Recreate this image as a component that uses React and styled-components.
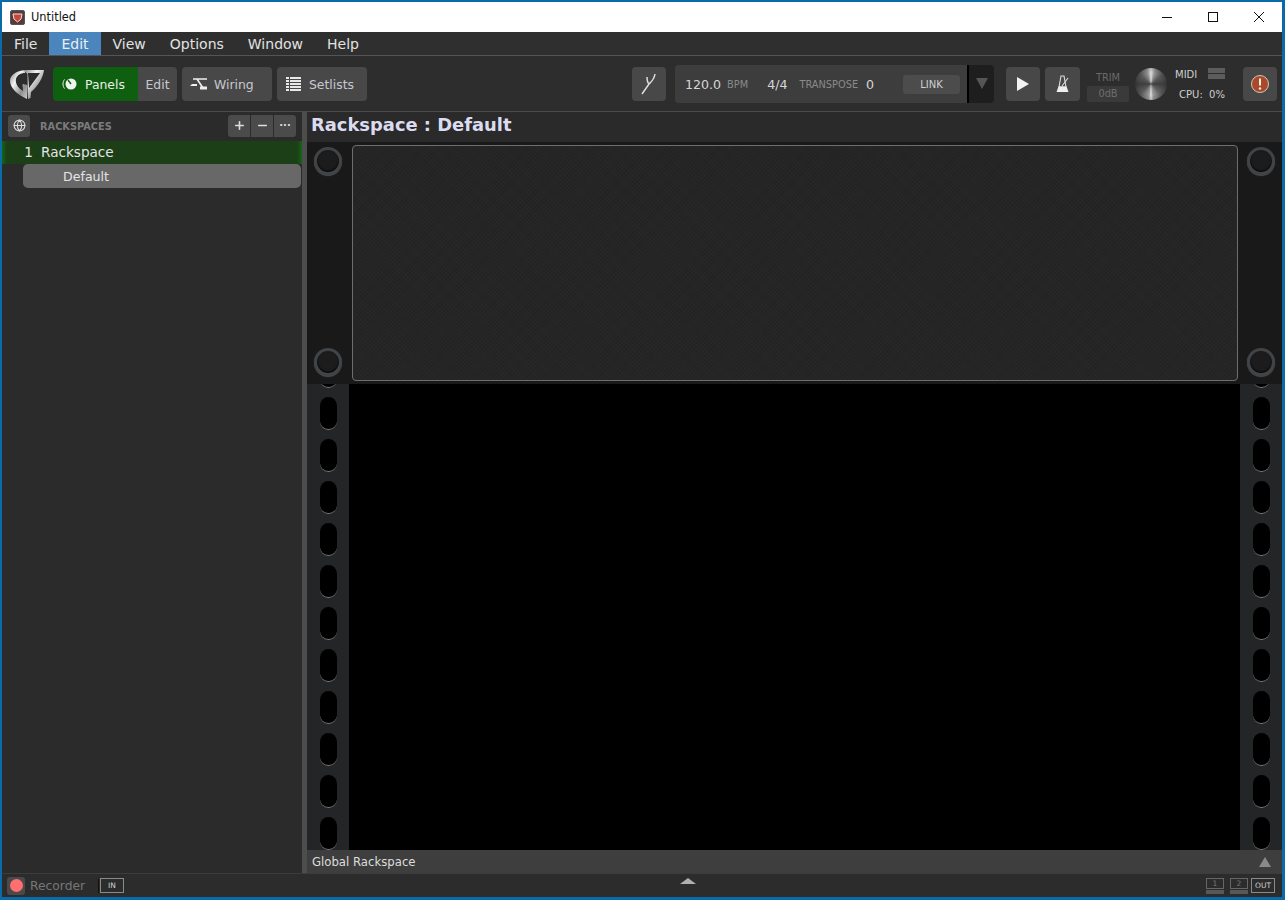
import React from "react"
import styled, { createGlobalStyle } from "styled-components"
import { Plus, Minus, Globe } from "lucide-react"

const Global = createGlobalStyle`
  html, body {
    margin: 0;
    padding: 0;
    height: 100%;
    overflow: hidden;
    background: #0b6aa8;
  }
  * {
    box-sizing: border-box;
  }
`

const Window = styled.div`
  width: 1285px;
  height: 900px;
  display: flex;
  flex-direction: column;
  padding: 2px 3px 3px 2px;
  background: #0b6aa8;
  font-family: "DejaVu Sans", sans-serif;
  color: #ddd;
`

const TitleBar = styled.div`
  height: 30px;
  flex: none;
  display: flex;
  align-items: center;
  background: #fff;
  color: #111;
  font-size: 11.4px;
  padding-left: 8px;
`

const AppIcon = styled.div`
  width: 15px;
  height: 15px;
  border-radius: 2px;
  background: #5a3a36;
  border: 1px solid #555;
  margin-right: 6px;
  display: flex;
  align-items: center;
  justify-content: center;
`

const WindowControls = styled.div`
  margin-left: auto;
  display: flex;
  align-items: center;
`

const WindowButton = styled.div`
  width: 46px;
  height: 30px;
  display: flex;
  align-items: center;
  justify-content: center;
`

const MenuBar = styled.div`
  height: 24px;
  flex: none;
  display: flex;
  background: #2f2f2f;
  border-bottom: 1px solid #555;
`

const MenuItem = styled.div`
  height: 23px;
  padding: 0 12px;
  display: flex;
  align-items: center;
  font-size: 14px;
  color: ${({ $active }) => ($active ? "#e8eef5" : "#e2e2e2")};
  background: ${({ $active }) => ($active ? "#4a86bd" : "transparent")};
`

const Toolbar = styled.div`
  height: 56px;
  flex: none;
  display: flex;
  align-items: center;
  background: #2d2d2d;
  border-bottom: 1px solid #4a4a4a;
  padding: 0 5px 0 7px;
`

const Logo = styled.svg`
  width: 36px;
  height: 32px;
  flex: none;
  margin-right: 8px;
`

const ToolButton = styled.div`
  height: 34px;
  width: ${({ $w }) => $w}px;
  flex: none;
  display: flex;
  align-items: center;
  justify-content: ${({ $pl }) => ($pl ? "flex-start" : "center")};
  gap: ${({ $gap }) => $gap ?? 7}px;
  padding-left: ${({ $pl }) => $pl || 0}px;
  padding-top: 1px;
  margin-left: ${({ $ml }) => $ml ?? 5}px;
  font-size: 12.4px;
  color: ${({ $on }) => ($on ? "#e8f0e8" : "#c8c8d0")};
  background: ${({ $on }) => ($on ? "#0f5f10" : "#484848")};
  border-radius: ${({ $radius }) => $radius || "4px"};
`

const Transport = styled.div`
  display: flex;
  align-items: center;
  margin-left: auto;
`

const Display = styled.div`
  width: 294px;
  height: 38px;
  margin-left: 9px;
  display: flex;
  align-items: center;
  background: #3d3d3d;
  border-radius: 4px 0 0 4px;
  border-right: 2px solid #000;
  padding: 1px 0 0 10px;
  font-size: 12.6px;
  color: #d6d6d6;
`

const Small = styled.span`
  font-size: 9.8px;
  color: #8a8a8a;
  margin-left: ${({ $ml }) => $ml || 0}px;
`

const Value = styled.span`
  margin-left: ${({ $ml }) => $ml || 0}px;
`

const LinkButton = styled.div`
  width: 57px;
  height: 19px;
  margin-left: auto;
  margin-right: 7px;
  display: flex;
  align-items: center;
  justify-content: center;
  background: #4c4c4c;
  border-radius: 3px;
  font-size: 10px;
  color: #d0d0d0;
`

const DropDown = styled.div`
  width: 25px;
  height: 38px;
  display: flex;
  align-items: center;
  justify-content: center;
  background: #1e1e1e;
  border-radius: 0 4px 4px 0;
`

const Arrow = styled.div`
  width: 0;
  height: 0;
  border-left: ${({ $w }) => $w}px solid transparent;
  border-right: ${({ $w }) => $w}px solid transparent;
  border-${({ $up }) => ($up ? "bottom" : "top")}: ${({ $h }) => $h}px solid ${({ $c }) => $c};
`

const Trim = styled.div`
  width: 42px;
  margin: 6px 0 0 7px;
  display: flex;
  flex-direction: column;
  align-items: center;
  gap: 3px;
  font-size: 9.8px;
  color: #6a6a6a;
`

const TrimValue = styled.div`
  width: 42px;
  height: 16px;
  display: flex;
  align-items: center;
  justify-content: center;
  background: #3a3a3a;
  color: #6e6e6e;
  border-radius: 2px;
`

const Knob = styled.div`
  width: 32px;
  height: 32px;
  margin-left: 6px;
  flex: none;
  border-radius: 50%;
  background:
    radial-gradient(circle, rgba(60, 60, 60, 0.1) 0 50%, rgba(0, 0, 0, 0.45) 100%),
    conic-gradient(#f0f0f0 0deg, #9a9a9a 18deg, #5c5c5c 50deg, #3e3e3e 90deg, #666 135deg, #a8a8a8 170deg, #f6f6f6 180deg, #a8a8a8 190deg, #5c5c5c 230deg, #3e3e3e 270deg, #5c5c5c 310deg, #9a9a9a 342deg, #f0f0f0 360deg);
`

const Meters = styled.div`
  width: 58px;
  margin: 2px 0 0 8px;
  display: grid;
  grid-template-columns: 33px 17px;
  row-gap: 9px;
  align-items: center;
  font-size: 10px;
  color: #cfcfcf;
`

const MidiLights = styled.div`
  display: flex;
  flex-direction: column;
  gap: 1px;
  margin-top: -3px;
`

const MidiLight = styled.div`
  width: 17px;
  height: 5px;
  background: #5c5c5c;
`

const Cpu = styled.div`
  grid-column: 1 / 3;
  text-align: right;
`

const Main = styled.div`
  flex: 1;
  min-height: 0;
  display: flex;
  background: #2a2a2a;
`

const Sidebar = styled.div`
  width: 300px;
  flex: none;
  background: #2b2b2b;
`

const SideHead = styled.div`
  height: 29px;
  display: flex;
  align-items: center;
  padding: 0 6px 2px 6px;
`

const SideButton = styled.div`
  width: 22px;
  height: 22px;
  display: flex;
  align-items: center;
  justify-content: center;
  background: #4b4b4b;
  color: #ddd;
  border-radius: ${({ $radius }) => $radius || "3px"};
  margin-left: ${({ $ml }) => $ml || 0}px;
  font-size: 10px;
  font-weight: 700;
  line-height: 1;
`

const SideTitle = styled.div`
  margin: 2px auto 0 10px;
  font-size: 9.8px;
  font-weight: 700;
  color: #7c7c7c;
`

const RackRow = styled.div`
  height: 23px;
  display: flex;
  align-items: center;
  padding-bottom: 2px;
  background: linear-gradient(90deg, #146414 0, #1c3f18 5px, #1c3f18 calc(100% - 5px), #146414 100%);
  font-size: 13.6px;
  color: #e4e4e4;
`

const RackIndex = styled.span`
  width: 39px;
  padding-right: 8px;
  text-align: right;
`

const VariationRow = styled.div`
  height: 24px;
  margin: 0 1px 0 21px;
  padding-left: 40px;
  display: flex;
  align-items: center;
  background: #686868;
  border-radius: 5px;
  font-size: 12.6px;
  color: #e4e4e4;
`

const Splitter = styled.div`
  width: 5px;
  flex: none;
  background: #4d4d4d;
`

const Content = styled.div`
  flex: 1;
  min-width: 0;
  display: flex;
  flex-direction: column;
`

const RackHead = styled.div`
  height: 30px;
  flex: none;
  display: flex;
  align-items: center;
  padding: 0 0 5px 4px;
  background: #2a2a2a;
  font-size: 17.9px;
  font-weight: 700;
  color: #dcdcf0;
`

const TopRack = styled.div`
  height: 242px;
  flex: none;
  display: flex;
  background: #191919;
`

const ScrewColumn = styled.div`
  width: 44px;
  flex: none;
  display: flex;
  flex-direction: column;
  align-items: center;
  justify-content: space-between;
  padding: 5px ${({ $left }) => ($left ? "2px" : "0")} 8px ${({ $left }) => ($left ? "0" : "2px")};
`

const Screw = styled.div`
  width: 28px;
  height: 28px;
  border-radius: 50%;
  background: #1c1c1c;
  border: 3px solid #404447;
  box-shadow: inset 0 -1px 2px #000, 0 1px 1px #4c4c4c;
`

const Panel = styled.div`
  flex: 1;
  margin: 3px 0 3px 1px;
  background:
    repeating-linear-gradient(45deg, rgba(255, 255, 255, 0.012) 0 1px, transparent 1px 3px),
    repeating-linear-gradient(-45deg, rgba(0, 0, 0, 0.07) 0 1px, transparent 1px 3px),
    #252525;
  border: 1px solid #6e6e6e;
  border-radius: 4px;
`

const LowerRack = styled.div`
  flex: 1;
  min-height: 0;
  display: flex;
  background: #000;
`

const Rail = styled.div`
  width: 42px;
  flex: none;
  overflow: hidden;
  display: flex;
  flex-direction: column;
  align-items: center;
  gap: 9px;
  background: #232527;
`

const Slot = styled.div`
  width: 17px;
  height: 33px;
  flex: none;
  border-radius: 9px;
  background: #000;
  border-bottom: 1px solid #7c7c7c;
  &:first-child {
    margin-top: -29px;
  }
`

const Hole = styled.div`
  flex: 1;
`

const GlobalBar = styled.div`
  height: 23px;
  flex: none;
  display: flex;
  align-items: center;
  justify-content: space-between;
  padding: 0 11px 0 5px;
  background: #3e3e3e;
  font-size: 11.7px;
  color: #dcdcdc;
`

const StatusBar = styled.div`
  height: 24px;
  flex: none;
  position: relative;
  display: flex;
  align-items: center;
  background: #2c2c2c;
  border-top: 1px solid #3c3c3c;
  padding: 0 7px 0 5px;
`

const RecordButton = styled.div`
  width: 18px;
  height: 18px;
  display: flex;
  align-items: center;
  justify-content: center;
  background: #4a4a4a;
  border-radius: 3px;
`

const RecordDot = styled.div`
  width: 13px;
  height: 13px;
  border-radius: 50%;
  background: #ff6f70;
`

const RecorderLabel = styled.div`
  width: 74px;
  padding-left: 5px;
  border-right: 1px solid #111;
  font-size: 12.3px;
  color: #777;
`

const PortBox = styled.div`
  width: 24px;
  height: 15px;
  margin-left: ${({ $ml }) => $ml || 0}px;
  display: flex;
  align-items: center;
  justify-content: center;
  border: 1px solid ${({ $dim }) => ($dim ? "#666" : "#8a8a8a")};
  font-size: 7.5px;
  color: ${({ $dim }) => ($dim ? "#777" : "#d0d0d0")};
`

const Channel = styled.div`
  margin-left: 6px;
  display: flex;
  flex-direction: column;
  gap: 1px;
`

const ChannelLevel = styled.div`
  width: 18px;
  height: 4px;
  background: #585858;
`

const ChannelBox = styled(PortBox)`
  width: 18px;
  height: 11px;
  margin: 0;
`

const PortsRight = styled.div`
  margin-left: auto;
  display: flex;
  align-items: center;
`

const Expand = styled.div`
  position: absolute;
  left: 678px;
  top: 4px;
`

const slots = Array.from({ length: 13 })
const listRows = [1, 4, 7, 10, 13]

const RackRail = () => (
  <Rail>
    {slots.map((_, i) => (
      <Slot key={i} />
    ))}
  </Rail>
)

const Screws = ({ left }) => (
  <ScrewColumn $left={left}>
    <Screw />
    <Screw />
  </ScrewColumn>
)

export default function App() {
  return (
    <Window>
      <Global />
      <TitleBar>
        <AppIcon>
          <svg width="11" height="11" viewBox="0 0 11 11">
            <path d="M1 2h9l-1 5-3.5 3L2 7z" fill="#c9463a" stroke="#e8e0dc" strokeWidth="1" />
          </svg>
        </AppIcon>
        Untitled
        <WindowControls>
          <WindowButton>
            <svg width="12" height="12" viewBox="0 0 12 12">
              <path d="M1 6.5h10" stroke="#111" strokeWidth="1" />
            </svg>
          </WindowButton>
          <WindowButton>
            <svg width="12" height="12" viewBox="0 0 12 12">
              <rect x="1.5" y="1.5" width="9" height="9" fill="none" stroke="#111" />
            </svg>
          </WindowButton>
          <WindowButton>
            <svg width="12" height="12" viewBox="0 0 12 12">
              <path d="M1 1l10 10M11 1L1 11" stroke="#111" strokeWidth="1" />
            </svg>
          </WindowButton>
        </WindowControls>
      </TitleBar>

      <MenuBar>
        <MenuItem>File</MenuItem>
        <MenuItem $active>Edit</MenuItem>
        <MenuItem>View</MenuItem>
        <MenuItem>Options</MenuItem>
        <MenuItem>Window</MenuItem>
        <MenuItem>Help</MenuItem>
      </MenuBar>

      <Toolbar>
        <Logo viewBox="0 0 36 32">
          <defs>
            <linearGradient id="gp" x1="0" y1="0" x2="1" y2="1">
              <stop offset="0" stopColor="#7e7e7e" />
              <stop offset="0.35" stopColor="#f4f4f4" />
              <stop offset="0.7" stopColor="#8e8e8e" />
              <stop offset="1" stopColor="#d0d0d0" />
            </linearGradient>
          </defs>
          <path d="M16 2C7 3 1 7 1 13c0 7 8 14 17 18l.5-14-5-1 .5 7C9 20 6 15 7 11c1-4 5-6 9-6z" fill="url(#gp)" />
          <path fillRule="evenodd" d="M14 2h21c-1 8-6 16-13 22l-.5 6-2.5 1L18.500 6zM19 5h12L20 20z" fill="url(#gp)" />
        </Logo>
        <ToolButton $on $w={85} $ml={0} $pl={9} $radius="4px 0 0 4px">
          <svg width="16" height="14" viewBox="0 0 16 14">
            <circle cx="9" cy="7" r="5.5" fill="#eef4ee" />
            <path d="M9 7L6 3" stroke="#0f5f10" strokeWidth="1.4" />
            <path d="M2.500 2.500C.5 5 .5 9 2.500 11.500" fill="none" stroke="#eef4ee" />
          </svg>
          Panels
        </ToolButton>
        <ToolButton $w={39} $ml={0} $radius="0 4px 4px 0">Edit</ToolButton>
        <ToolButton $w={90} $pl={8} $gap={6}>
          <svg width="18" height="14" viewBox="0 0 18 14">
            <path d="M3 2h14M7 2l6 9" fill="none" stroke="#eee" strokeWidth="1.6" />
            <path d="M0 9l2-2h5v2zM10 9.500h7v3h-7z" fill="#eee" />
          </svg>
          Wiring
        </ToolButton>
        <ToolButton $w={90} $pl={9} $gap={8}>
          <svg width="15" height="15" viewBox="0 0 15 15">
            {listRows.map((y) => (
              <path key={y} d={`M0 ${y}h3M4 ${y}h11`} stroke="#e8e8e8" strokeWidth="2" />
            ))}
          </svg>
          Setlists
        </ToolButton>

        <Transport>
          <ToolButton $w={34} $ml={0}>
            <svg width="18" height="22" viewBox="0 0 18 22">
              <path d="M2 21l7-10c2-2 5-4 6-10M9 11C7 9 7 6 7 4" fill="none" stroke="#ddd" strokeWidth="1.5" />
            </svg>
          </ToolButton>
          <Display>
            <Value>120.0</Value>
            <Small $ml={6}>BPM</Small>
            <Value $ml={19}>4/4</Value>
            <Small $ml={12}>TRANSPOSE</Small>
            <Value $ml={8}>0</Value>
            <LinkButton>LINK</LinkButton>
          </Display>
          <DropDown>
            <Arrow $w={6} $h={11} $c="#555" />
          </DropDown>
          <ToolButton $w={34} $ml={12}>
            <svg width="14" height="16" viewBox="0 0 14 16">
              <path d="M1 1l12 7-12 7z" fill="#f2f2f2" />
            </svg>
          </ToolButton>
          <ToolButton $w={35}>
            <svg width="18" height="18" viewBox="0 0 18 18">
              <path d="M7 1h3l2 11H5z" fill="none" stroke="#ddd" strokeWidth="1.1" />
              <path d="M4.500 11.500h8l2 5.500h-12z" fill="#eee" />
              <path d="M8 11l6-8" stroke="#ddd" strokeWidth="1.1" />
            </svg>
          </ToolButton>
          <Trim>
            TRIM
            <TrimValue>0dB</TrimValue>
          </Trim>
          <Knob />
          <Meters>
            <span>MIDI</span>
            <MidiLights>
              <MidiLight />
              <MidiLight />
            </MidiLights>
            <Cpu>CPU:&nbsp; 0%</Cpu>
          </Meters>
          <ToolButton $w={34} $ml={10}>
            <svg width="20" height="20" viewBox="0 0 20 20">
              <circle cx="10" cy="10" r="8.500" fill="#a8492a" stroke="#d9c4b8" />
              <path d="M10 4.500v7" stroke="#f4ece6" strokeWidth="2" />
              <circle cx="10" cy="14.500" r="1.200" fill="#f4ece6" />
            </svg>
          </ToolButton>
        </Transport>
      </Toolbar>

      <Main>
        <Sidebar>
          <SideHead>
            <SideButton>
              <Globe size={13} color="#ddd" />
            </SideButton>
            <SideTitle>RACKSPACES</SideTitle>
            <SideButton $radius="3px 0 0 3px">
              <Plus size={13} strokeWidth={3} />
            </SideButton>
            <SideButton $radius="0" $ml={1}>
              <Minus size={13} strokeWidth={3} />
            </SideButton>
            <SideButton $radius="0 3px 3px 0" $ml={1}>···</SideButton>
          </SideHead>
          <RackRow>
            <RackIndex>1</RackIndex>
            Rackspace
          </RackRow>
          <VariationRow>Default</VariationRow>
        </Sidebar>
        <Splitter />
        <Content>
          <RackHead>Rackspace : Default</RackHead>
          <TopRack>
            <Screws left />
            <Panel />
            <Screws />
          </TopRack>
          <LowerRack>
            <RackRail />
            <Hole />
            <RackRail />
          </LowerRack>
          <GlobalBar>
            Global Rackspace
            <Arrow $up $w={6} $h={10} $c="#8a8a8a" />
          </GlobalBar>
        </Content>
      </Main>

      <StatusBar>
        <RecordButton>
          <RecordDot />
        </RecordButton>
        <RecorderLabel>Recorder</RecorderLabel>
        <PortBox $ml={1}>IN</PortBox>
        <Expand>
          <Arrow $up $w={8} $h={6} $c="#b0b0b0" />
        </Expand>
        <PortsRight>
          <Channel>
            <ChannelBox $dim>1</ChannelBox>
            <ChannelLevel />
          </Channel>
          <Channel>
            <ChannelBox $dim>2</ChannelBox>
            <ChannelLevel />
          </Channel>
          <PortBox $ml={3}>OUT</PortBox>
        </PortsRight>
      </StatusBar>
    </Window>
  )
}
